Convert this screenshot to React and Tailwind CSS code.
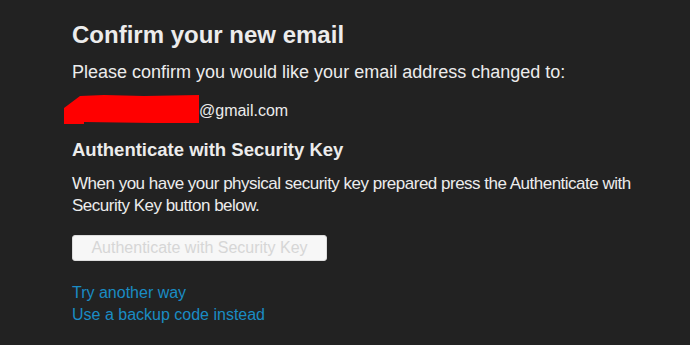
import React from 'react';

const Scribble = () => (
  <svg width="135" height="30" viewBox="0 0 135 30" className="block">
    <polygon points="16,2 40,1 80,2 135,1 135,29 90,29 20,28 20,30 0,30 0,14 8,8" fill="#ff0000" />
  </svg>
);

export default function App() {
  return (
    <div className="min-h-screen w-full bg-[#222222] text-[#ececec] font-['Liberation_Sans',Arial,sans-serif]">
      <div className="pl-[72px] pt-[20px] w-[640px]">
        <h1 className="text-[24px] font-bold leading-[30px]">Confirm your new email</h1>
        <p className="text-[18px] leading-[24px] mt-[10px]">
          Please confirm you would like your email address changed to:
        </p>
        <div className="flex items-center mt-[10px] ml-[-8px] h-[30px]">
          <Scribble />
          <span className="text-[16px] leading-[22px] mt-[3px]">@gmail.com</span>
        </div>
        <h2 className="text-[18.5px] font-bold leading-[26px] mt-[13px]">Authenticate with Security Key</h2>
        <p className="text-[17px] tracking-[-0.5px] leading-[22px] mt-[10px]">
          When you have your physical security key prepared press the Authenticate with Security Key button below.
        </p>
        <button
          disabled
          className="mt-[18px] w-[255px] h-[26px] rounded-[3px] bg-[#f7f7f7] border border-[#ddd] text-[16px] text-[#d6d6d6] leading-[24px]"
        >
          Authenticate with Security Key
        </button>
        <div className="mt-[21px] flex flex-col text-[16px] leading-[22px] text-[#1a8cc4]">
          <a href="#">Try another way</a>
          <a href="#">Use a backup code instead</a>
        </div>
      </div>
    </div>
  );
}
